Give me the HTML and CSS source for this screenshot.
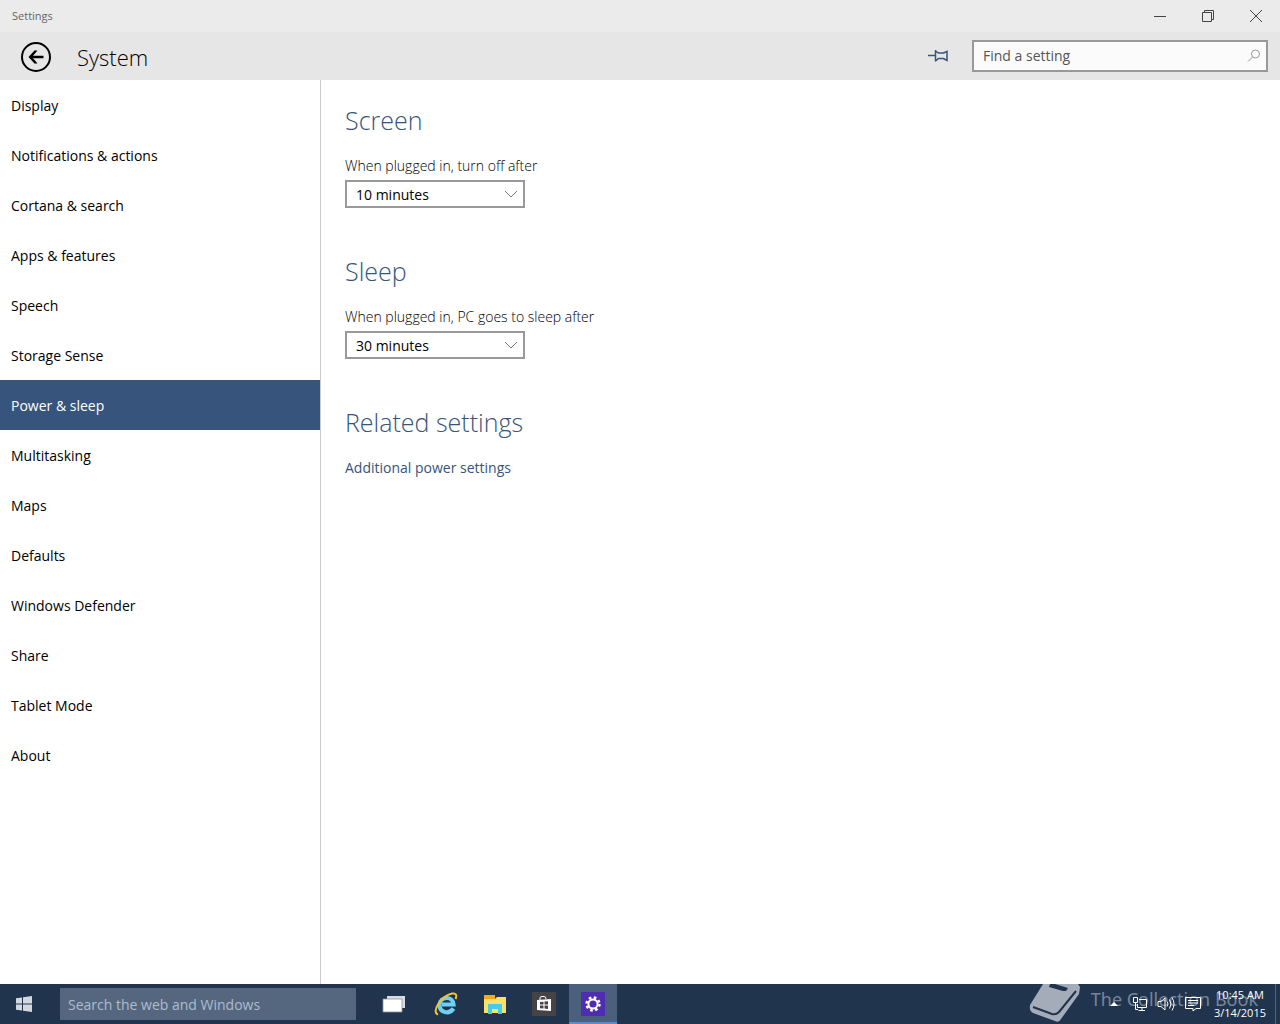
FILE: index.html
```html
<!DOCTYPE html>
<html lang="en">
<head>
    <meta charset="UTF-8">
    <meta name="viewport" content="width=device-width, initial-scale=1.0">
    <title>Settings</title>
    <link rel="stylesheet" href="styles.css">
</head>
<body>
    <div class="titlebar">
        <span class="titlebar-text">Settings</span>
        <div class="window-buttons">
            <button type="button" aria-label="Minimize">
                <svg width="12" height="12" viewBox="0 0 12 12"><path d="M0 6.5H12"/></svg>
            </button>
            <button type="button" aria-label="Restore">
                <svg width="12" height="12" viewBox="0 0 12 12"><path d="M.5 2.5H9.5V11.5H.5ZM2.5 2.5V.5H11.5V9.5H9.5"/></svg>
            </button>
            <button type="button" aria-label="Close">
                <svg width="12" height="12" viewBox="0 0 12 12"><path d="M0 0L12 12M12 0L0 12"/></svg>
            </button>
        </div>
    </div>

    <header class="header">
        <button type="button" class="back" aria-label="Back">
            <svg width="30" height="30" viewBox="0 0 30 30"><circle cx="15" cy="15" r="14"/><path stroke-width="2.5" d="M9.5 15H22.5"/><path class="solid" d="M7.5 15L13.5 8.5H16.5L11 15L16.5 21.5H13.5Z"/></svg>
        </button>
        <h1>System</h1>
        <button type="button" class="pin" aria-label="Pin to Start">
            <svg width="20" height="14" viewBox="0 0 20 14"><path d="M0 6.5H7M7.5 1V12.5M7.5 2L10.5 4H15.5L19 2.5V11.5L15.5 9.5H10.5L7.5 12"/></svg>
        </button>
        <div class="find">
            <input type="text" placeholder="Find a setting" aria-label="Find a setting">
            <svg width="14" height="14" viewBox="0 0 14 14"><circle cx="8.5" cy="5" r="4"/><path d="M5.5 8L1 12.5"/></svg>
        </div>
    </header>

    <div class="page">
        <nav class="sidebar">
            <a href="#">Display</a>
            <a href="#">Notifications &amp; actions</a>
            <a href="#">Cortana &amp; search</a>
            <a href="#">Apps &amp; features</a>
            <a href="#">Speech</a>
            <a href="#">Storage Sense</a>
            <a href="#" class="active">Power &amp; sleep</a>
            <a href="#">Multitasking</a>
            <a href="#">Maps</a>
            <a href="#">Defaults</a>
            <a href="#">Windows Defender</a>
            <a href="#">Share</a>
            <a href="#">Tablet Mode</a>
            <a href="#">About</a>
        </nav>

        <main class="content">
            <section>
                <h2>Screen</h2>
                <label for="screen-off">When plugged in, turn off after</label>
                <div class="select-box">
                    <select id="screen-off">
                        <option>5 minutes</option>
                        <option selected>10 minutes</option>
                        <option>30 minutes</option>
                    </select>
                    <svg width="14" height="8" viewBox="0 0 14 8"><path d="M1 1L7 7L13 1"/></svg>
                </div>
            </section>
            <section>
                <h2>Sleep</h2>
                <label for="sleep-after">When plugged in, PC goes to sleep after</label>
                <div class="select-box">
                    <select id="sleep-after">
                        <option>10 minutes</option>
                        <option selected>30 minutes</option>
                        <option>1 hour</option>
                    </select>
                    <svg width="14" height="8" viewBox="0 0 14 8"><path d="M1 1L7 7L13 1"/></svg>
                </div>
            </section>
            <section>
                <h2>Related settings</h2>
                <a href="#" class="link">Additional power settings</a>
            </section>
        </main>
    </div>

    <footer class="taskbar">
        <button type="button" class="start" aria-label="Start">
            <svg width="16" height="16" viewBox="0 0 16 16"><path d="M0 2.2L6 1.4V7.5H0ZM7 1.2L16 0V7.5H7ZM0 8.5H6V14.6L0 13.8ZM7 8.5H16V16L7 14.8Z"/></svg>
        </button>
        <input type="text" class="web-search" placeholder="Search the web and Windows" aria-label="Search the web and Windows">
        <div class="apps">
            <button type="button" aria-label="Task view">
                <svg width="30" height="24" viewBox="0 0 30 24"><path fill="#d8dce0" d="M5 4H23V16H5Z"/><path fill="#fff" stroke="#8c96a3" stroke-width=".8" d="M1 7H20V20H1Z"/></svg>
            </button>
            <button type="button" aria-label="Internet Explorer">
                <svg width="24" height="24" viewBox="0 0 24 24"><path fill="none" stroke="#6fd0f5" stroke-width="4.2" d="M19.5 16.5C15 23 5.5 20.5 5.5 13C6 4 19 3.5 19.5 12.5H8"/><path fill="none" stroke="#f6c32b" stroke-width="2" d="M4 22.5C-3 20 7 4 18 1.5C22.5 .8 23 3.5 21.5 7"/></svg>
            </button>
            <button type="button" aria-label="File Explorer">
                <svg width="24" height="24" viewBox="0 0 24 24"><path fill="#f5a81c" d="M1 3H12V7H1Z"/><path fill="#fde06b" d="M1 7H12L14 5H23V21H1Z"/><path fill="#4cc9e8" d="M5 12H19V22H15V17H9V22H5Z"/></svg>
            </button>
            <button type="button" aria-label="Store">
                <svg width="24" height="24" viewBox="0 0 24 24"><path fill="#444" d="M0 0H24V24H0Z"/><path fill="none" stroke="#fff" d="M8 8V6Q8 4.5 10 4.5H12Q14 4.5 14 7"/><path fill="#fff" d="M5 8L19 7V19L5 18Z"/><path fill="#444" d="M8 10L11.5 9.7V12.5H8ZM12.5 9.6L16 9.3V12.5H12.5ZM8 13.5H11.5V16.5L8 16.2ZM12.5 13.5H16V16.9L12.5 16.6Z"/></svg>
            </button>
            <button type="button" class="open" aria-label="Settings">
                <svg width="24" height="24" viewBox="0 0 24 24"><path fill="#4f2db0" d="M0 0H24V24H0Z"/><circle cx="12" cy="12" r="6.5" fill="none" stroke="#fff" stroke-width="2.4" stroke-dasharray="2.6 2.505"/><circle cx="12" cy="12" r="4.6" fill="none" stroke="#fff" stroke-width="2"/></svg>
            </button>
        </div>
        <div class="watermark">
            <svg width="52" height="40" viewBox="0 0 52 40"><path fill="#a3acb8" d="M14 0H49L51 3L50 10L32 35Q30 39 26 37L4 29Q0 27 1 21Z"/><path fill="#21344e" d="M21 0H26L39 4L37 7L34 7L20 3Z"/><path fill="none" stroke="#21344e" stroke-width="2" d="M47 7L30 28Q27 31 23 30L4 23"/></svg>
            <span>The Collection Book</span>
        </div>
        <div class="tray">
            <svg class="more" width="8" height="4" viewBox="0 0 8 4"><path fill="#fff" stroke="none" d="M0 4L4 0L8 4Z"/></svg>
            <svg width="16" height="16" viewBox="0 0 16 16"><path d="M7 3.5H14.5V11.5H5.5V8M10 12V14.5M6.5 14.5H13M1.5 1.5H5.5V6.5H1.5ZM3.5 7V13.5H6"/></svg>
            <svg width="18" height="16" viewBox="0 0 18 16"><path d="M1 5.5H4L8 2V14L4 10.5H1ZM10 5.5Q12 8 10 10.5M12.5 3.5Q15.5 8 12.5 12.5M15 1.5Q19 8 15 14.5"/></svg>
            <svg width="18" height="16" viewBox="0 0 18 16"><path d="M1.5 1.5H16.5V12.5H12L9 15V12.5H1.5ZM4 4.5H14M4 7H14M4 9.5H10"/></svg>
            <div class="clock">
                <span>10:45 AM</span>
                <span>3/14/2015</span>
            </div>
        </div>
    </footer>
</body>
</html>
```
FILE: styles.css
```css
* {
    box-sizing: border-box;
}
body {
    margin: 0;
    min-height: 100vh;
    display: flex;
    flex-direction: column;
    font-family: "Open Sans", "Noto Sans", sans-serif;
    font-size: 14px;
    line-height: 20px;
    color: #000;
    background: #fff;
}
button {
    display: flex;
    align-items: center;
    justify-content: center;
    padding: 0;
    border: none;
    background: none;
}
input, select {
    font: inherit;
    border-radius: 0;
}
h1, h2 {
    margin: 0;
    font-weight: 300;
}
a {
    text-decoration: none;
}
svg {
    display: block;
    flex-shrink: 0;
    fill: none;
}

/* Window chrome */
.titlebar {
    display: flex;
    justify-content: space-between;
    align-items: center;
    height: 32px;
    padding-left: 12px;
    background: #ebebeb;
}
.titlebar-text {
    font-size: 11px;
    color: #666;
}
.window-buttons {
    display: flex;
}
.window-buttons button {
    width: 48px;
    height: 32px;
}
.window-buttons svg {
    stroke: #444;
}
.header {
    display: flex;
    align-items: center;
    height: 48px;
    padding: 0 12px 0 21px;
    background: #e6e6e6;
}
.back {
    padding-top: 2px;
}
.back svg {
    stroke: #000;
    stroke-width: 2;
}
.back .solid {
    fill: #000;
    stroke: none;
}
.header h1 {
    margin-left: 26px;
    padding-top: 2px;
    font-size: 22px;
    line-height: 32px;
}
.pin {
    margin-left: auto;
    margin-right: 24px;
}
.pin svg {
    stroke: #36547c;
    stroke-width: 1.5;
}
.find {
    display: flex;
    align-items: center;
    width: 296px;
    height: 32px;
    padding: 0 5px 0 9px;
    border: 2px solid #999;
    background: #fbfbfb;
}
.find input {
    flex: 1;
    min-width: 0;
    padding: 0;
    border: none;
    background: none;
}
.find input::placeholder {
    color: #555;
}
.find svg {
    stroke: #999;
}

/* Page body */
.page {
    flex: 1;
    display: flex;
}
.sidebar {
    width: 321px;
    border-right: 1px solid #ccc;
}
.sidebar a {
    display: block;
    padding: 16px 11px 14px;
    color: #000;
}
.sidebar .active {
    color: #fff;
    background: #37547c;
}
.content {
    flex: 1;
    padding: 24px;
}
.content section {
    margin-bottom: 47px;
}
.content h2 {
    margin-bottom: 20px;
    font-size: 25px;
    line-height: 32px;
    color: #36547c;
}
.content label {
    display: block;
    margin-bottom: 4px;
    font-weight: 300;
}
.select-box {
    position: relative;
    width: 180px;
}
.select-box select {
    display: block;
    width: 100%;
    height: 28px;
    padding: 2px 9px 0;
    border: 2px solid #999;
    background: #fff;
    color: #000;
    appearance: none;
}
.select-box svg {
    position: absolute;
    right: 7px;
    top: 10px;
    stroke: #777;
    pointer-events: none;
}
.link {
    color: #36547c;
}

/* Taskbar */
.taskbar {
    position: relative;
    display: flex;
    height: 40px;
    background: #21344e;
}
.start {
    width: 48px;
}
.start svg {
    fill: #d3d8df;
}
.web-search {
    width: 296px;
    height: 32px;
    margin: 4px 17px 4px 12px;
    padding: 0 8px;
    border: none;
    background: #54677f;
}
.web-search::placeholder {
    color: #aebdce;
}
.apps {
    display: flex;
    gap: 1px;
}
.apps button {
    width: 48px;
    height: 40px;
}
.apps .open {
    padding-top: 2px;
    background: #4b607c;
    border-bottom: 2px solid #5b8bd4;
}
/* Sits behind the tray icons and the clock */
.watermark {
    position: absolute;
    right: 22px;
    top: 0;
    display: flex;
    gap: 10px;
    font-family: "Noto Sans", sans-serif;
    font-size: 18px;
    line-height: 30px;
    color: #76859a;
}
.tray {
    position: relative;
    display: flex;
    align-items: center;
    gap: 9px;
    margin-left: auto;
    margin-right: 4px;
    padding-right: 9px;
    border-right: 1px solid #53647a;
}
.tray svg {
    stroke: #fff;
}
.tray .more {
    margin-right: 5px;
}
.clock {
    display: flex;
    flex-direction: column;
    align-items: center;
    margin-left: 3px;
    font-size: 11px;
    line-height: 18px;
    color: #fff;
}
```
